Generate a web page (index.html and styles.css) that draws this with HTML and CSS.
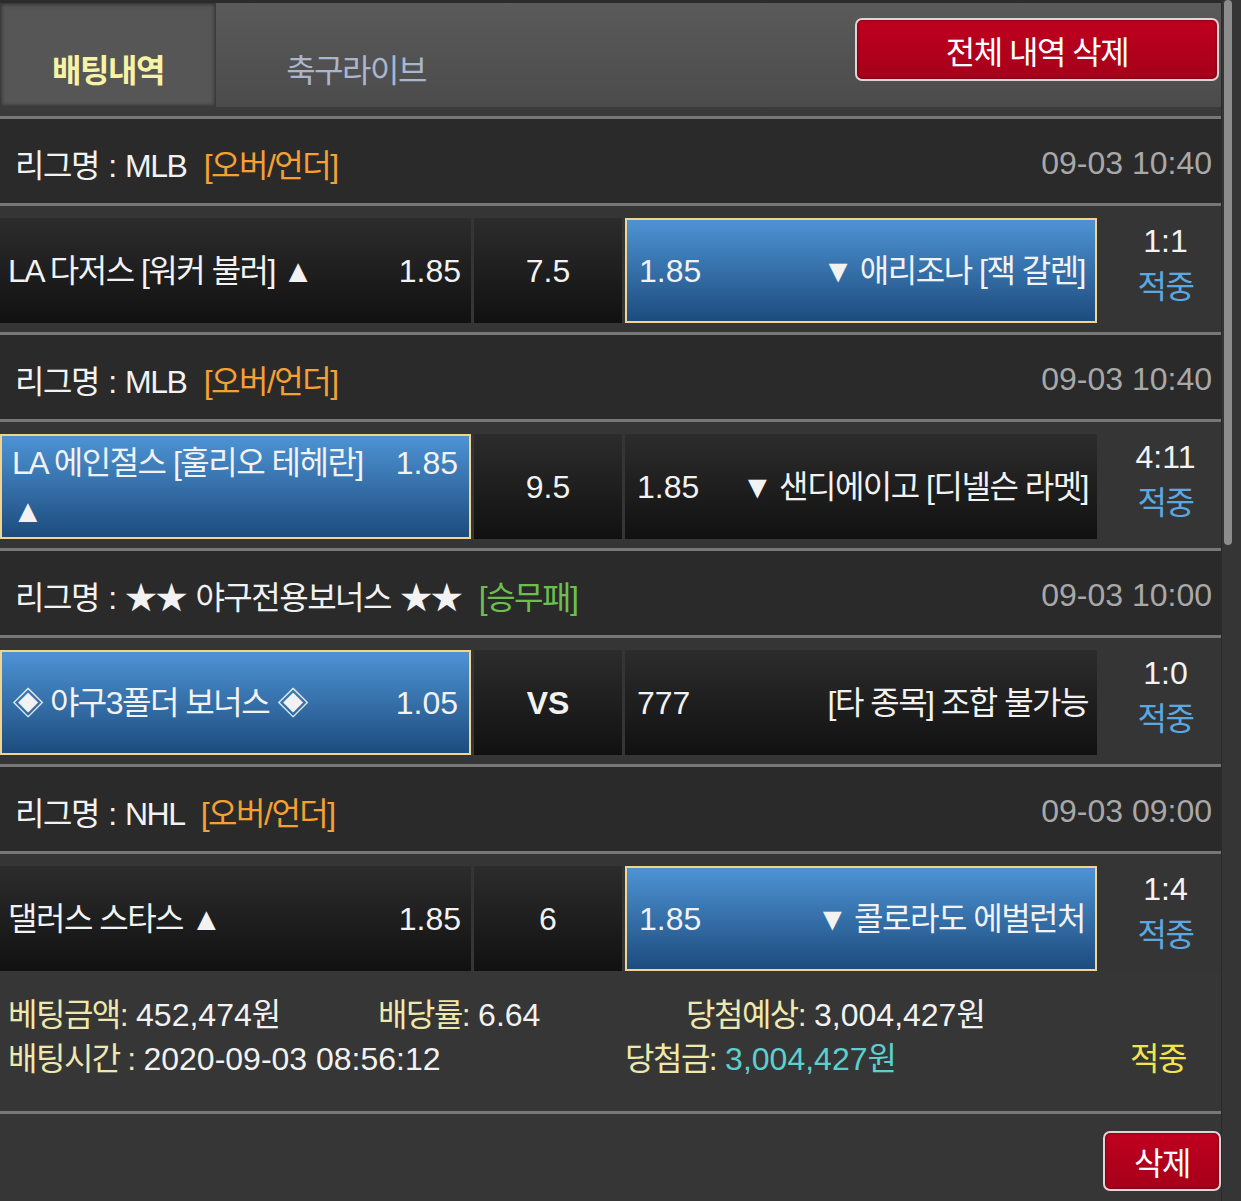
FILE: index.html
```html
<!DOCTYPE html>
<html lang="ko">
<head>
    <meta charset="UTF-8">
    <meta name="viewport" content="width=device-width, initial-scale=1.0">
    <title>배팅내역</title>
    <link rel="stylesheet" href="styles.css">
</head>
<body>
<div class="screen">
    <div class="page">

        <div class="top-bar">
            <div class="tabs">
                <a class="tab active">배팅내역</a>
                <a class="tab live">축구라이브</a>
            </div>
            <button class="btn-red btn-all">전체 내역 삭제</button>
        </div>

        <div class="bet-list">
            <!-- 1 -->
            <div class="league">
                <span class="league-name">리그명 : MLB <span class="type ou">[오버/언더]</span></span>
                <span class="date">09-03 10:40</span>
            </div>
            <div class="match">
                <div class="pick home"><div class="pick-text"><span class="odds">1.85</span><span class="ko">LA 다저스 [워커 불러] ▲</span></div></div>
                <div class="pick line">7.5</div>
                <div class="pick away selected"><div class="pick-text"><span class="odds">1.85</span><span class="ko">▼ 애리조나 [잭 갈렌]</span></div></div>
                <div class="result"><span class="score">1:1</span><span class="status ko">적중</span></div>
            </div>

            <!-- 2 -->
            <div class="league">
                <span class="league-name">리그명 : MLB <span class="type ou">[오버/언더]</span></span>
                <span class="date">09-03 10:40</span>
            </div>
            <div class="match">
                <div class="pick home selected"><div class="pick-text"><span class="odds">1.85</span><span class="ko">LA 에인절스 [훌리오 테헤란] ▲</span></div></div>
                <div class="pick line">9.5</div>
                <div class="pick away"><div class="pick-text"><span class="odds">1.85</span><span class="ko">▼ 샌디에이고 [디넬슨 라멧]</span></div></div>
                <div class="result"><span class="score">4:11</span><span class="status ko">적중</span></div>
            </div>

            <!-- 3 -->
            <div class="league">
                <span class="league-name">리그명 : ★★ 야구전용보너스 ★★ <span class="type wdl">[승무패]</span></span>
                <span class="date">09-03 10:00</span>
            </div>
            <div class="match">
                <div class="pick home selected"><div class="pick-text"><span class="odds">1.05</span><span class="ko">◈ 야구3폴더 보너스 ◈</span></div></div>
                <div class="pick line vs">VS</div>
                <div class="pick away"><div class="pick-text"><span class="odds">777</span><span class="ko">[타 종목] 조합 불가능</span></div></div>
                <div class="result"><span class="score">1:0</span><span class="status ko">적중</span></div>
            </div>

            <!-- 4 -->
            <div class="league">
                <span class="league-name">리그명 : NHL <span class="type ou">[오버/언더]</span></span>
                <span class="date">09-03 09:00</span>
            </div>
            <div class="match last">
                <div class="pick home"><div class="pick-text"><span class="odds">1.85</span><span class="ko">댈러스 스타스 ▲</span></div></div>
                <div class="pick line">6</div>
                <div class="pick away selected"><div class="pick-text"><span class="odds">1.85</span><span class="ko">▼ 콜로라도 에벌런처</span></div></div>
                <div class="result"><span class="score">1:4</span><span class="status ko">적중</span></div>
            </div>

            <div class="summary">
                <div class="sum-row">
                    <span class="sum-item w1"><span class="label">베팅금액:</span> 452,474원</span>
                    <span class="sum-item w2"><span class="label">배당률:</span> 6.64</span>
                    <span class="sum-item"><span class="label">당첨예상:</span> 3,004,427원</span>
                </div>
                <div class="sum-row">
                    <span class="sum-item w3"><span class="label">배팅시간 :</span> 2020-09-03 08:56:12</span>
                    <span class="sum-item w4"><span class="label">당첨금:</span> <span class="win">3,004,427원</span></span>
                    <span class="sum-item hit">적중</span>
                </div>
            </div>

            <div class="actions">
                <button class="btn-red btn-del">삭제</button>
            </div>
        </div>

    </div>
    <div class="scrollbar"><div class="thumb"></div></div>
</div>
</body>
</html>
```

FILE: styles.css
```css
body {
    margin: 0;
    background-color: #363636;
    color: #f2f2f2;
    font-family: "Liberation Sans", "Noto Sans CJK KR", sans-serif;
    font-size: 32px;
}
.screen {
    display: flex;
    width: 1241px;
    min-height: 1201px;
}
.page {
    width: 1221px;
    background: #363636;
}
.scrollbar {
    width: 20px;
    background: #353535;
    border-left: 1px solid #2a2a2a;
    box-sizing: border-box;
    padding-left: 2px;
}
.thumb {
    width: 8px;
    height: 545px;
    background: #8c8c8c;
    border-radius: 4px;
}

/* top bar */
.top-bar {
    display: flex;
    justify-content: space-between;
    align-items: flex-start;
    height: 104px;
    border-top: 3px solid #2b2b2b;
    border-bottom: 9px solid #3b3b3b;
    background: linear-gradient(#5a5a5a, #4b4b4b);
}
.tabs {
    display: flex;
    height: 104px;
}
.tab {
    display: flex;
    align-items: center;
    justify-content: center;
    box-sizing: border-box;
    padding-top: 26px;
    height: 104px;
    letter-spacing: -1.5px;
    color: #a9b6cc;
}
.tab.active {
    width: 216px;
    background: #565656;
    border: 1px solid #3a3a3a;
    box-shadow: inset 0 0 4px #2a2a2a;
    color: #f7f3a6;
    font-weight: bold;
}
.tab.live {
    width: 280px;
}
.btn-red {
    background: linear-gradient(#c0001f, #a5001a);
    border: 2px solid #ddd6d6;
    border-radius: 7px;
    box-shadow: inset 0 0 3px #60000d;
    color: #fff;
    font-family: inherit;
    font-size: 32px;
    letter-spacing: -1.5px;
    cursor: pointer;
}
.btn-all {
    width: 364px;
    height: 63px;
    margin: 15px 2px 0 0;
}

/* league rows */
.league {
    display: flex;
    justify-content: space-between;
    align-items: center;
    height: 90px;
    box-sizing: border-box;
    padding: 4px 9px 0 15px;
    background: #2a2a2a;
    border-top: 3px solid #777;
    border-bottom: 3px solid #777;
}
.league-name {
    letter-spacing: -1.5px;
    word-spacing: 2px;
}
.type {
    margin-left: 8px;
}
.ou {
    color: #f5a033;
}
.wdl {
    color: #6cbf4f;
}
.date {
    color: #a8a8a8;
}

/* match rows */
.match {
    display: flex;
    gap: 3px;
    height: 105px;
    padding: 12px 0 9px;
    background: #353535;
}
.match.last {
    padding-bottom: 0;
}
.pick {
    display: flex;
    align-items: center;
    box-sizing: border-box;
    background: linear-gradient(#2c2c2c, #111);
    line-height: 48px;
}
.pick-text {
    width: 100%;
}
.ko {
    letter-spacing: -1.5px;
}
.home {
    width: 471px;
    padding: 0 10px 0 8px;
}
.home .odds {
    float: right;
    margin-left: 4px;
}
.line {
    width: 148px;
    justify-content: center;
}
.vs {
    font-weight: bold;
}
.away {
    width: 472px;
    padding: 0 9px 0 12px;
    text-align: right;
}
.away .odds {
    float: left;
}
.selected {
    background: linear-gradient(#4d93d4, #1d4c7e);
    border: 2px solid #f3d48c;
}
.home.selected {
    padding: 0 11px 0 10px;
}
.away.selected {
    padding: 0 10px 0 12px;
}
.result {
    flex: 1;
    display: flex;
    flex-direction: column;
    justify-content: center;
    align-items: center;
    padding: 0 0 14px 10px;
    line-height: 46px;
}
.status {
    color: #5aa9e2;
}

/* summary */
.summary {
    padding: 22px 0 30px 8px;
    line-height: 44px;
    background: #363636;
}
.sum-row {
    display: flex;
}
.sum-item {
    white-space: nowrap;
}
.label {
    color: #efe8ad;
    letter-spacing: -1.5px;
}
.w1 { width: 370px; }
.w2 { width: 308px; }
.w3 { width: 617px; }
.w4 { width: 505px; }
.win {
    color: #5ccfcf;
}
.hit {
    color: #f2e44c;
    letter-spacing: -1.5px;
}

.actions {
    display: flex;
    justify-content: flex-end;
    border-top: 3px solid #777;
    padding-top: 17px;
    height: 87px;
    box-sizing: border-box;
}
.btn-del {
    width: 118px;
    height: 60px;
}
```
